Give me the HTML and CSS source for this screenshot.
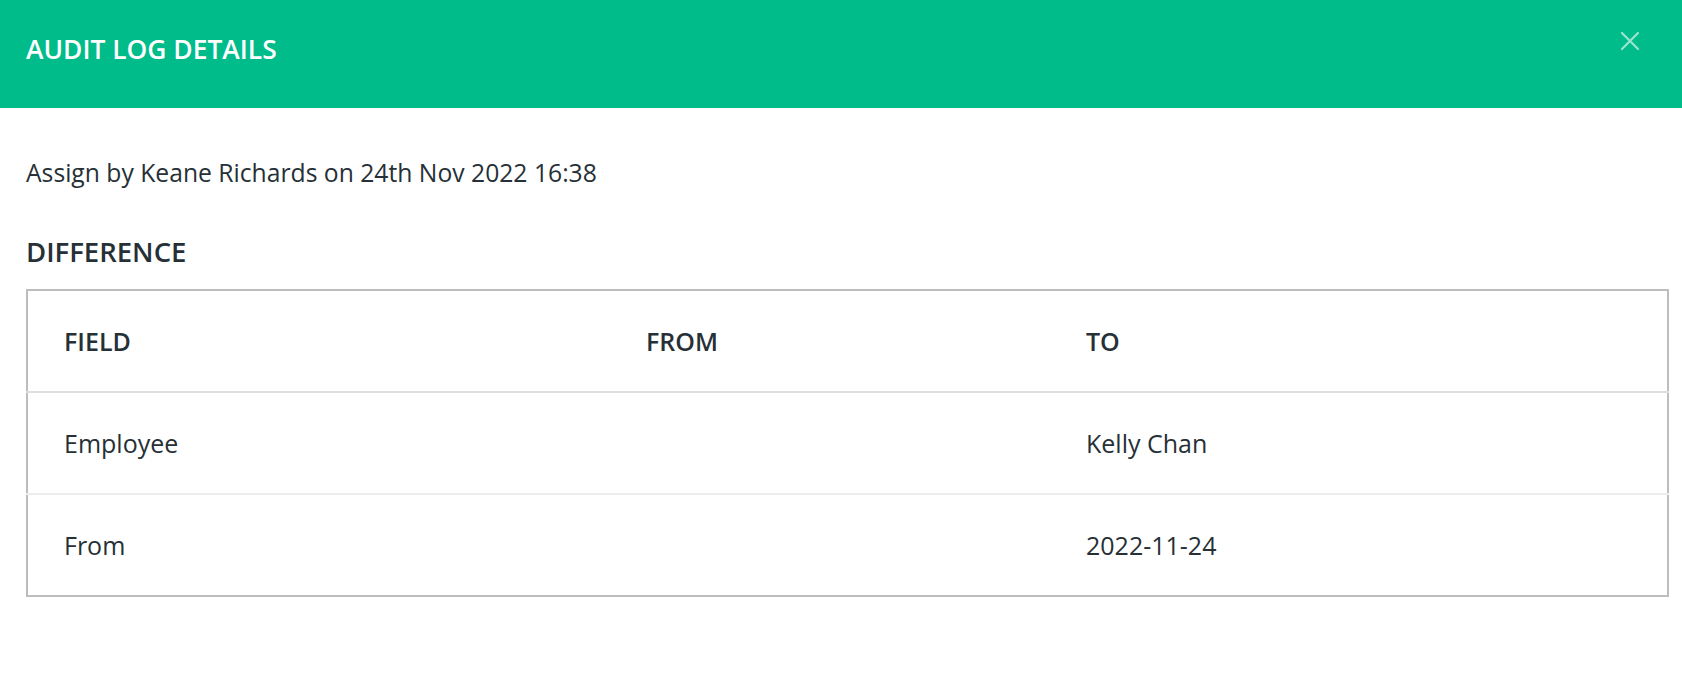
FILE: index.html
```html
<!DOCTYPE html>
<html lang="en-US">
<head>
  <meta charset="utf-8">
  <title>Audit Log Details</title>
  <link rel="stylesheet" href="styles.css">
</head>
<body>
  <div class="modal">
    <div class="modal-header">
      <h1 class="modal-title">AUDIT LOG DETAILS</h1>
      <button class="modal-close" type="button" aria-label="Close">
        <svg width="20" height="20" viewBox="0 0 20 20">
          <path d="M2 2 L18 18 M18 2 L2 18" stroke="currentColor" stroke-width="2.2" stroke-linecap="round" fill="none"/>
        </svg>
      </button>
    </div>

    <div class="modal-body">
      <p class="summary">Assign by Keane Richards on 24th Nov 2022 16:38</p>

      <h2 class="section-title">DIFFERENCE</h2>

      <table class="diff-table">
        <thead>
          <tr>
            <th class="col-field">FIELD</th>
            <th class="col-from">FROM</th>
            <th class="col-to">TO</th>
          </tr>
        </thead>
        <tbody>
          <tr>
            <td>Employee</td>
            <td></td>
            <td>Kelly Chan</td>
          </tr>
          <tr>
            <td>From</td>
            <td></td>
            <td>2022-11-24</td>
          </tr>
        </tbody>
      </table>
    </div>
  </div>
</body>
</html>
```

FILE: styles.css
```css
body {
  margin: 0;
  background: #ffffff;
  font-family: "Open Sans", "Noto Sans", Arial, sans-serif;
  color: #263036;
}

.modal-header {
  height: 108px;
  background: #00bc8a;
  display: flex;
  align-items: flex-start;
  padding: 0 42px 0 26px;
}

.modal-title {
  margin: 31px 0 0 0;
  font-size: 26.4px;
  line-height: 36px;
  font-weight: 600;
  color: #ffffff;
}

.modal-close {
  margin: 31px 0 0 auto;
  padding: 0;
  border: 0;
  background: none;
  color: rgba(255, 255, 255, 0.6);
  width: 20px;
  height: 20px;
}

.modal-close svg {
  display: block;
}

.modal-body {
  padding: 0 13px 0 26px;
}

.summary {
  margin: 47px 0 0 0;
  font-size: 24.7px;
  line-height: 36px;
}

.section-title {
  margin: 43px 0 0 0;
  font-size: 27.5px;
  line-height: 36px;
  font-weight: 600;
}

.diff-table {
  margin-top: 19px;
  width: 100%;
  border-collapse: collapse;
  border: 2px solid #bdbdbd;
  font-size: 25px;
}

.diff-table th,
.diff-table td {
  height: 100px;
  padding: 0 0 0 36px;
  text-align: left;
  vertical-align: middle;
}

.diff-table th {
  font-weight: 600;
  border-bottom: 2px solid #dedede;
}

.diff-table tbody tr + tr td {
  border-top: 2px solid #ececec;
}

.col-field { width: 546px; }
.col-from { width: 404px; }
```
